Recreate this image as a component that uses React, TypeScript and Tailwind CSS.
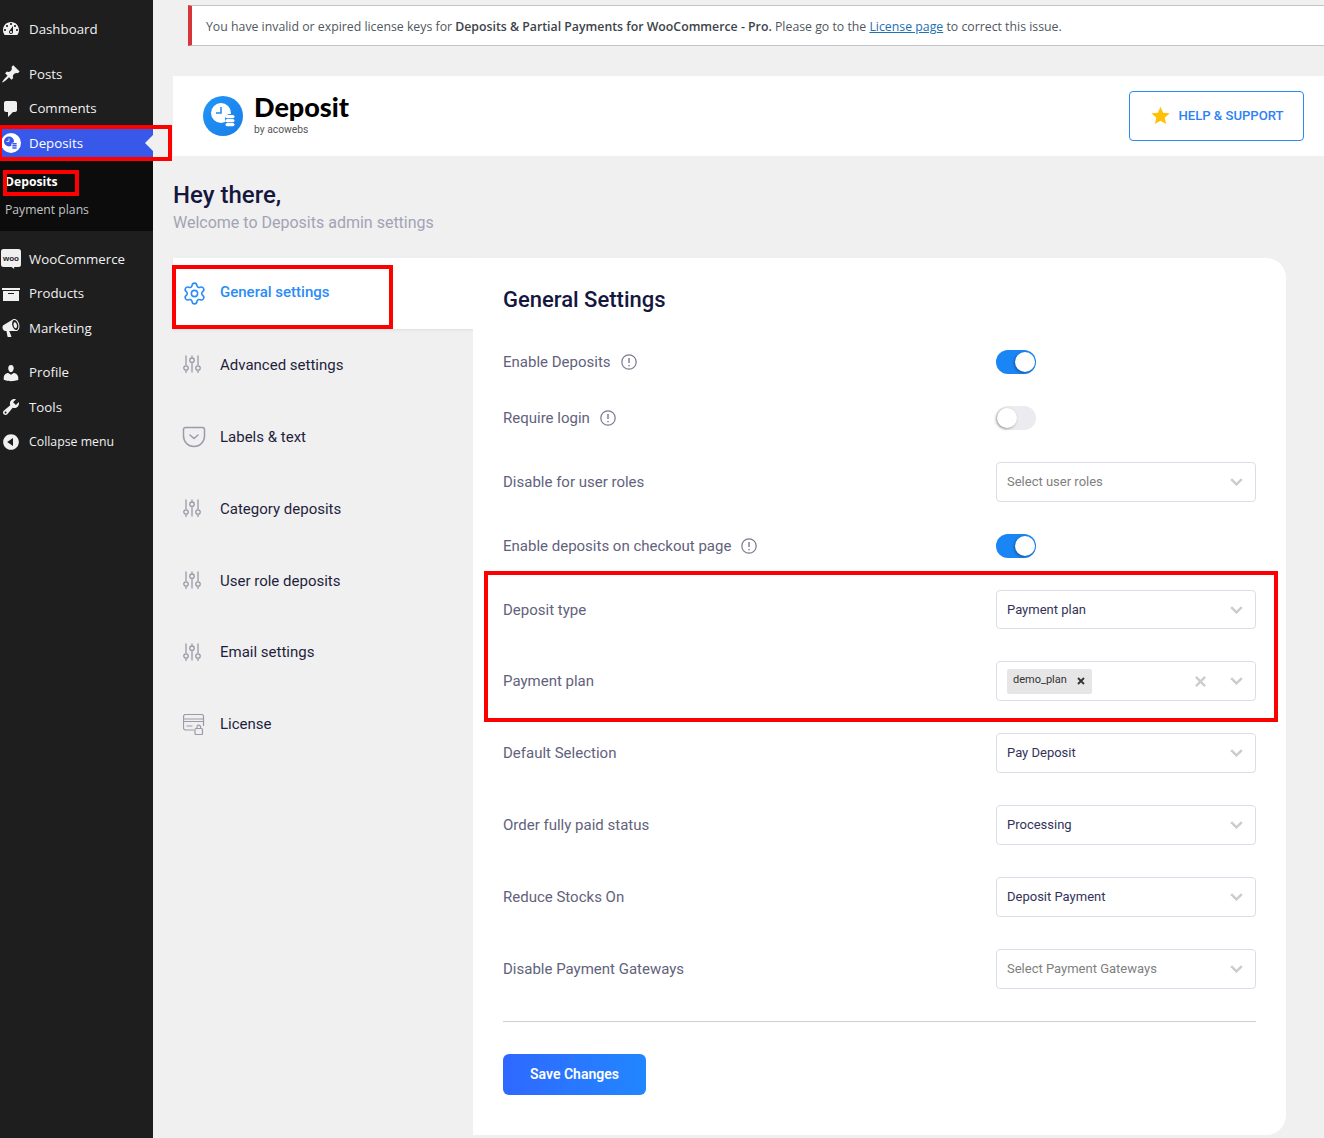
import { Settings } from "lucide-react";
import type { ReactNode } from "react";

function Dash({ d, className }: { d: string; className?: string }) {
  return (
    <svg viewBox="0 0 20 20" className={className ?? "w-5 h-5"} fill="currentColor">
      <path d={d} />
    </svg>
  );
}

const icons = {
  dashboard:
    "M3.76 16h12.48c1.1-1.37 1.76-3.11 1.76-5 0-4.42-3.58-8-8-8s-8 3.58-8 8c0 1.89.66 3.63 1.76 5zM10 4c.55 0 1 .45 1 1s-.45 1-1 1-1-.45-1-1 .45-1 1-1zM6 6c.55 0 1 .45 1 1s-.45 1-1 1-1-.45-1-1 .45-1 1-1zm8 0c.55 0 1 .45 1 1s-.45 1-1 1-1-.45-1-1 .45-1 1-1zm-5.37 5.55L12 7v6c0 1.1-.9 2-2 2s-2-.9-2-2c0-.57.24-1.08.63-1.45zM4 10c.55 0 1 .45 1 1s-.45 1-1 1-1-.45-1-1 .45-1 1-1zm12 0c.55 0 1 .45 1 1s-.45 1-1 1-1-.45-1-1 .45-1 1-1zm-5 3c0-.55-.45-1-1-1s-1 .45-1 1 .45 1 1 1 1-.45 1-1z",
  post: "M10.44 3.02l1.82-1.82 6.36 6.35-1.83 1.82c-1.05-.68-2.48-.57-3.41.36l-.75.75c-.92.93-1.04 2.35-.35 3.41l-1.83 1.82-2.41-2.41-2.8 2.79c-.42.42-3.38 2.71-3.8 2.29s1.86-3.39 2.28-3.81l2.79-2.79L4.1 9.36l1.83-1.82c1.05.69 2.48.57 3.4-.36l.75-.75c.93-.92 1.05-2.35.36-3.41z",
  comments: "M5 2h9c1.1 0 2 .9 2 2v7c0 1.1-.9 2-2 2h-2l-5 5v-5H5c-1.1 0-2-.9-2-2V4c0-1.1.9-2 2-2z",
  archive: "M19 4v2H1V4h18zM2 7h16v10H2V7zm11 3V9H7v1h6z",
  megaphone:
    "M18.15 5.94c.46 1.62.38 3.22-.02 4.48-.42 1.28-1.26 2.18-2.3 2.48-.16.06-.26.06-.4.06-.06.02-.12.02-.18.02-.06.02-.14.02-.22.02h-6.8l2.22 5.5c.02.14-.06.26-.14.34-.08.1-.24.16-.34.16H6.95c-.1 0-.26-.06-.34-.16-.08-.08-.16-.2-.14-.34l-1-5.5H4.25l-.02-.02c-.5.06-1.08-.18-1.54-.62s-.88-1.08-1.06-1.88c-.24-.8-.2-1.56-.02-2.2.18-.62.58-1.08 1.06-1.3l.02-.02 9-5.4c.1-.06.18-.1.24-.16.06-.04.14-.08.24-.12.16-.08.28-.12.5-.18 1.04-.3 2.24.1 3.22.98s1.84 2.24 2.26 3.86zm-2.58 5.98h-.02c.4-.1.74-.34 1.04-.7.58-.7.86-1.76.86-3.04 0-.64-.1-1.3-.28-1.98-.34-1.36-1.02-2.5-1.78-3.24s-1.68-1.1-2.46-.88c-.38.12-.7.38-.96.72-.58.7-.86 1.78-.86 3.04 0 .66.1 1.34.28 2 .34 1.36 1.02 2.5 1.78 3.24.78.74 1.62 1.08 2.4.84zm-.66-1.66c-.5.16-1.08-.2-1.46-.78-.32-.5-.58-1.1-.76-1.8-.4-1.54-.12-3.12.84-3.4.56-.16 1.14.2 1.52.78.34.5.6 1.1.78 1.8.4 1.54.12 3.12-.92 3.4z",
  users:
    "M10 9.25c-2.27 0-2.73-3.44-2.73-3.44C7 4.02 7.82 2 9.97 2c2.16 0 2.98 2.02 2.71 3.81 0 0-.41 3.44-2.68 3.44zm0 2.57L12.72 10c2.39 0 4.52 2.33 4.52 4.53v2.49s-3.65 1.13-7.24 1.13c-3.65 0-7.24-1.13-7.24-1.13v-2.49c0-2.25 1.94-4.48 4.47-4.48z",
  tools:
    "M16.68 9.77c-1.34 1.34-3.3 1.67-4.95.99l-5.41 6.52c-.99.99-2.59.99-3.58 0s-.99-2.59 0-3.57l6.52-5.42c-.68-1.65-.35-3.61.99-4.95 1.28-1.28 3.12-1.62 4.72-1.06l-2.89 2.89 2.82 2.82 2.86-2.87c.53 1.58.18 3.39-1.08 4.65zM3.81 16.21c.4.39 1.04.39 1.43 0 .4-.4.4-1.04 0-1.43-.39-.4-1.03-.4-1.43 0-.39.39-.39 1.03 0 1.43z",
  collapse: "M10 2.16c4.33 0 7.84 3.51 7.84 7.84s-3.51 7.84-7.84 7.84S2.16 14.33 2.16 10 5.71 2.16 10 2.16zm2 11.72V6.12L6.18 9.97z",
};

function WooIcon() {
  return (
    <svg viewBox="0 0 20 20" className="w-5 h-5">
      <path d="M2.500 0h15a2.500 2.500 0 0 1 2.500 2.500v13a2.500 2.500 0 0 1-2.500 2.500h-4.500l.3 2-2.800-2h-8A2.500 2.500 0 0 1 0 15.500v-13A2.500 2.500 0 0 1 2.500 0z" fill="#f0f0f1" />
      <text x="10" y="11.500" textAnchor="middle" fontSize="8" fontWeight="700" fill="#1e1e1e" fontFamily="Liberation Sans, sans-serif">
        woo
      </text>
    </svg>
  );
}

function DepositsIcon() {
  return (
    <svg viewBox="0 0 20 20" className="w-5 h-5">
      <circle cx="10" cy="10" r="10" fill="#fff" />
      <circle cx="8" cy="8.500" r="5" fill="#3858e9" />
      <path d="M8 5.500v3H5.500" fill="none" stroke="#fff" strokeWidth="0.800" />
      <circle cx="13.500" cy="12.500" r="3.200" fill="#fff" />
      <rect x="11.200" y="10" width="4.600" height="1.500" rx="0.700" fill="#3858e9" />
      <rect x="11.200" y="12.100" width="4.600" height="1.500" rx="0.700" fill="#3858e9" />
      <rect x="11.200" y="14.200" width="4.600" height="1.500" rx="0.700" fill="#3858e9" />
    </svg>
  );
}

function SideItem({ icon, label, small }: { icon: ReactNode; label: string; small?: boolean }) {
  return (
    <div className="flex items-center h-[34.500px] text-[#f0f0f1]">
      <div className="w-[29px] pl-[1px] shrink-0 text-[#f0f0f1]">{icon}</div>
      <span className={`mt-[1px] ${small ? "text-[12.300px]" : "text-[13.300px]"}`}>{label}</span>
    </div>
  );
}

function Sidebar() {
  return (
    <aside className="w-[153px] shrink-0 bg-[#1e1e1e] pt-[12px] font-['Open_Sans','Noto_Sans',sans-serif]">
      <SideItem icon={<Dash d={icons.dashboard} />} label="Dashboard" />
      <div className="mt-[10.500px]">
        <SideItem icon={<Dash d={icons.post} />} label="Posts" />
        <SideItem icon={<Dash d={icons.comments} />} label="Comments" />
      </div>
      <div className="flex items-center h-[34px] bg-[#3858e9] text-white">
        <div className="w-[29px] pl-[1px] shrink-0">
          <DepositsIcon />
        </div>
        <span className="text-[13.300px] mt-[1px]">Deposits</span>
        <div className="ml-auto w-0 h-0 border-y-[8px] border-y-transparent border-r-[8px] border-r-[#f0f0f0]" />
      </div>
      <div className="bg-[#0c0c0c] h-[71px] pl-[5px] pt-[8px] text-[12.200px]">
        <div className="h-[28px] leading-[28px] font-bold text-white">Deposits</div>
        <div className="h-[28px] leading-[28px] text-[#c3c4c7]">Payment plans</div>
      </div>
      <div className="mt-[11px]">
        <SideItem icon={<WooIcon />} label="WooCommerce" />
        <SideItem icon={<Dash d={icons.archive} />} label="Products" />
        <SideItem icon={<Dash d={icons.megaphone} />} label="Marketing" />
      </div>
      <div className="mt-[10px]">
        <SideItem icon={<Dash d={icons.users} />} label="Profile" />
        <SideItem icon={<Dash d={icons.tools} />} label="Tools" />
        <SideItem icon={<Dash d={icons.collapse} />} label="Collapse menu" small />
      </div>
    </aside>
  );
}

function SlidersIcon() {
  return (
    <svg viewBox="0 0 18 18" className="w-[18px] h-[18px] -mt-[2px]" fill="none" stroke="#9a9aa8" strokeWidth="1.300">
      <path d="M3 0.500v10M3 15.500v2.500M9 0.500v2M9 7.500v10M15 0.500v10M15 15.500v2.500" />
      <circle cx="3" cy="13" r="2.200" />
      <circle cx="9" cy="5.200" r="2.200" />
      <circle cx="15" cy="13" r="2.200" />
    </svg>
  );
}

function PocketIcon() {
  return (
    <svg viewBox="0 0 24 22" className="w-[24px] h-[22px] -ml-[1px]" fill="none" stroke="#9a9aa8" strokeWidth="1.500" strokeLinecap="round" strokeLinejoin="round">
      <path d="M3.500 1.500h17a2 2 0 0 1 2 2v6.500a10.500 10.500 0 0 1-21 0V3.500a2 2 0 0 1 2-2z" />
      <path d="M8 9l4 3.500L16 9" />
    </svg>
  );
}

function LicenseIcon() {
  return (
    <svg viewBox="0 0 22 21" className="w-[22px] h-[21px]" fill="none" stroke="#9a9aa8" strokeWidth="1.200">
      <path d="M11 16H2.500a2 2 0 0 1-2-2V2.500a2 2 0 0 1 2-2h16a2 2 0 0 1 2 2V12" />
      <path d="M0.500 5h20M0.500 7.500h20M3.500 12h6" />
      <rect x="12" y="14.500" width="7.500" height="6" rx="1" fill="#f0f0f0" />
      <path d="M14 14.500v-1.500a1.800 1.800 0 0 1 3.600 0v1.500" />
    </svg>
  );
}

const tabs: { label: string; icon: ReactNode }[] = [
  { label: "Advanced settings", icon: <SlidersIcon /> },
  { label: "Labels & text", icon: <PocketIcon /> },
  { label: "Category deposits", icon: <SlidersIcon /> },
  { label: "User role deposits", icon: <SlidersIcon /> },
  { label: "Email settings", icon: <SlidersIcon /> },
  { label: "License", icon: <LicenseIcon /> },
];

function Tabs() {
  return (
    <div className="w-[300px] shrink-0">
      <div className="h-[71px] bg-white flex items-center pl-[9px] shadow-[0_1px_3px_rgba(0,0,0,0.08)] text-[#2a8cf7]">
        <div className="w-[38px] shrink-0">
          <Settings size={25} strokeWidth={1.500} />
        </div>
        <span className="text-[15px] font-medium -mt-[3px]">General settings</span>
      </div>
      {tabs.map((t) => (
        <div key={t.label} className="h-[71.950px] flex items-center pl-[10px] text-[15px] text-[#1f1f3d]">
          <div className="w-[37px] shrink-0">{t.icon}</div>
          <span>{t.label}</span>
        </div>
      ))}
    </div>
  );
}

function Info() {
  return (
    <svg viewBox="0 0 16 16" className="w-4 h-4 ml-[10px]" fill="none" stroke="#7a7a8c" strokeWidth="1.200">
      <circle cx="8" cy="8" r="7.200" />
      <path d="M8 4v5M8 11v1.300" strokeWidth="1.400" />
    </svg>
  );
}

function Toggle({ on }: { on?: boolean }) {
  return (
    <div className={`w-10 h-6 rounded-full flex items-center px-[3px] ${on ? "bg-[#1a86f5] justify-end" : "bg-[#ebebf0] justify-start"}`}>
      <div className="w-[20px] h-[20px] rounded-full bg-white shadow-[-1px_1px_3px_rgba(0,0,0,0.35)] -mx-[2px]" />
    </div>
  );
}

function Chevron() {
  return (
    <svg viewBox="0 0 14 9" className="w-[13px] h-[8px] shrink-0" fill="none" stroke="#cccccc" strokeWidth="2.700">
      <path d="M1 1.200l6 6 6-6" />
    </svg>
  );
}

function Select({ value, placeholder, short }: { value?: string; placeholder?: string; short?: boolean }) {
  return (
    <div className={`w-[260px] ${short ? "h-[39px]" : "h-10"} bg-white border border-[#dcdce8] rounded-[4px] flex items-center pl-[10px] pr-[12px]`}>
      <span className={`flex-1 text-[13px] ${value ? "text-[#33335a]" : "text-[#808080]"}`}>{value ?? placeholder}</span>
      <Chevron />
    </div>
  );
}

function MultiSelect() {
  return (
    <div className="w-[260px] h-10 bg-white border border-[#dcdce8] rounded-[4px] flex items-center pl-[10px] pr-[12px]">
      <div className="flex items-center h-[25px] w-[85px] bg-[#e6e6e6] rounded-[2px] pl-[6px] text-[11px] text-[#333]">
        <span className="-mt-[2px]">demo_plan</span>
        <svg viewBox="0 0 8 8" className="w-[8px] h-[8px] ml-[10px]" fill="none" stroke="#333" strokeWidth="1.800">
          <path d="M1 1l6 6M7 1l-6 6" />
        </svg>
      </div>
      <svg viewBox="0 0 12 12" className="w-[11px] h-[11px] ml-auto mr-[24px]" fill="none" stroke="#cccccc" strokeWidth="2.500">
        <path d="M1 1l10 10M11 1L1 11" />
      </svg>
      <Chevron />
    </div>
  );
}

function Row({ label, info, children, mt, labelClass }: { label: string; info?: boolean; children: ReactNode; mt?: string; labelClass?: string }) {
  return (
    <div className={`flex items-center justify-between ${mt ?? "mt-8"}`}>
      <div className={`flex items-center text-[15px] text-[#62627c] ${labelClass ?? ""}`}>
        <span>{label}</span>
        {info && <Info />}
      </div>
      <div className="w-[260px]">{children}</div>
    </div>
  );
}

function SettingsCard() {
  return (
    <div className="w-[813px] h-[877px] bg-white rounded-r-[20px] px-[30px] pt-[28px]">
      <h2 className="text-[22px] leading-[28px] font-medium text-[#15173e]">General Settings</h2>
      <Row label="Enable Deposits" info mt="mt-[36px]">
        <Toggle on />
      </Row>
      <Row label="Require login" info>
        <Toggle />
      </Row>
      <Row label="Disable for user roles">
        <Select placeholder="Select user roles" />
      </Row>
      <Row label="Enable deposits on checkout page" info>
        <Toggle on />
      </Row>
      <Row label="Deposit type" labelClass="mt-[2px]">
        <Select value="Payment plan" short />
      </Row>
      <Row label="Payment plan">
        <MultiSelect />
      </Row>
      <Row label="Default Selection">
        <Select value="Pay Deposit" />
      </Row>
      <Row label="Order fully paid status">
        <Select value="Processing" />
      </Row>
      <Row label="Reduce Stocks On">
        <Select value="Deposit Payment" />
      </Row>
      <Row label="Disable Payment Gateways">
        <Select placeholder="Select Payment Gateways" />
      </Row>
      <div className="mt-8 border-t border-[#cfcfcf]" />
      <button className="mt-8 w-[143px] h-[41px] rounded-[6px] bg-gradient-to-r from-[#2f68ff] to-[#2186ff] text-white text-[14px] font-semibold">
        Save Changes
      </button>
    </div>
  );
}

function Notice() {
  return (
    <div className="ml-[35px] mt-[5px] h-[41px] bg-white border-y border-[#c3c4c7] border-l-4 border-l-[#d63638] flex items-center pl-[14px] pt-[3px] text-[12.300px] text-[#50575e] whitespace-nowrap font-['Open_Sans','Noto_Sans',sans-serif]">
      <span>
        You have invalid or expired license keys for <span className="font-semibold text-[#3c434a]">Deposits &amp; Partial Payments for WooCommerce - Pro.</span> Please go to the{" "}
        <span className="underline text-[#2271b1]">License page</span> to correct this issue.
      </span>
    </div>
  );
}

function Header() {
  return (
    <div className="ml-[20px] mt-[30px] h-[80px] bg-white flex items-center pl-[30px] pr-[20px]">
      <svg viewBox="0 0 40 40" className="w-10 h-10 shrink-0">
        <defs>
          <linearGradient id="logoBlue" x1="0" y1="0" x2="1" y2="1">
            <stop offset="0" stopColor="#2196f8" />
            <stop offset="1" stopColor="#1a7de8" />
          </linearGradient>
        </defs>
        <circle cx="20" cy="20" r="20" fill="url(#logoBlue)" />
        <circle cx="18" cy="17" r="10" fill="#fff" />
        <path d="M18 11v6h-5" fill="none" stroke="#2088ef" strokeWidth="1.500" />
        <circle cx="27" cy="23" r="5" fill="#2088ef" />
        <g fill="#fff">
          <rect x="22.500" y="19" width="9" height="3.200" rx="1.600" />
          <rect x="22.500" y="23" width="9" height="3.200" rx="1.600" />
          <rect x="22.500" y="27" width="9" height="3.200" rx="1.600" />
        </g>
      </svg>
      <div className="ml-[11px] -mt-[2px]">
        <div className="font-['Lato',sans-serif] font-black text-[27px] leading-[26px] text-black">Deposit</div>
        <div className="text-[10.300px] leading-[14px] text-[#555] mt-[3px]">by acowebs</div>
      </div>
      <div className="ml-auto w-[175px] h-[50px] border border-[#2a8cf7] rounded-[4px] flex items-center justify-center gap-[8px] pl-[2px]">
        <svg viewBox="0 0 24 24" className="w-[19px] h-[19px] -mt-[2px]" fill="#ffc107">
          <path d="M12 1l3.300 7.500 8.200.800-6.200 5.400 1.800 8L12 18.500 4.900 22.700l1.800-8L.500 9.300l8.200-.800z" />
        </svg>
        <span className="text-[13.100px] font-medium text-[#2d82f5]">HELP &amp; SUPPORT</span>
      </div>
    </div>
  );
}

export default function App() {
  return (
    <div className="relative flex w-[1324px] h-[1138px] overflow-hidden bg-[#f0f0f0] font-['Roboto',sans-serif]">
      <Sidebar />
      <main className="flex-1 min-w-0">
        <Notice />
        <Header />
        <div className="ml-[20px] mt-[24px]">
          <h1 className="text-[24px] leading-[30px] font-medium text-[#15173e]">Hey there,</h1>
          <p className="text-[16px] leading-[24px] mt-[1px] text-[#a3a3b5]">Welcome to Deposits admin settings</p>
          <div className="flex mt-[23px]">
            <Tabs />
            <SettingsCard />
          </div>
        </div>
      </main>
      {/* red annotation boxes drawn over the shot */}
      <div className="absolute left-0 top-[125px] w-[172px] h-[36px] border-[4px] border-l-[2px] border-[#ff0000]" />
      <div className="absolute left-[3px] top-[170px] w-[76px] h-[26px] border-[4px] border-[#ff0000]" />
      <div className="absolute left-[172px] top-[265px] w-[221px] h-[64px] border-[4px] border-[#ff0000]" />
      <div className="absolute left-[484px] top-[571px] w-[794px] h-[151px] border-[4px] border-[#ff0000]" />
    </div>
  );
}
